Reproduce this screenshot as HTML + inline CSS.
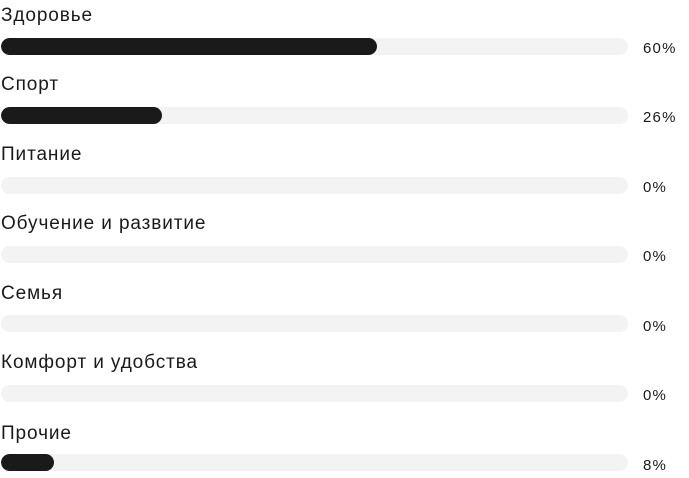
<!DOCTYPE html>
<html><head><meta charset="utf-8"><style>
body{margin:0;background:#fff;width:689px;height:478px;position:relative;overflow:hidden;font-family:"Liberation Sans",Arial,sans-serif;color:#1a1a1a}
.l{position:absolute;left:1px;font-size:19px;line-height:19px;letter-spacing:0.9px;white-space:nowrap}
.b{position:absolute;left:1px;width:627px;height:17px;border-radius:9px;background:#f3f3f3;overflow:hidden}
.b i{display:block;height:100%;background:#1a1a1a;border-radius:9px}
.p{position:absolute;left:643px;font-size:15px;line-height:15px;letter-spacing:1.2px}
</style></head><body>
<div class="l" style="top:6px">Здоровье</div><div class="b" style="top:38px"><i style="width:376px"></i></div><div class="p" style="top:41px">60%</div>
<div class="l" style="top:75px">Спорт</div><div class="b" style="top:107px"><i style="width:161px"></i></div><div class="p" style="top:110px">26%</div>
<div class="l" style="top:145px">Питание</div><div class="b" style="top:177px"></div><div class="p" style="top:180px">0%</div>
<div class="l" style="top:214px">Обучение и развитие</div><div class="b" style="top:246px"></div><div class="p" style="top:249px">0%</div>
<div class="l" style="top:284px">Семья</div><div class="b" style="top:315px"></div><div class="p" style="top:319px">0%</div>
<div class="l" style="top:353px">Комфорт и удобства</div><div class="b" style="top:385px"></div><div class="p" style="top:388px">0%</div>
<div class="l" style="top:424px">Прочие</div><div class="b" style="top:454px"><i style="width:53px"></i></div><div class="p" style="top:458px">8%</div>
</body></html>
